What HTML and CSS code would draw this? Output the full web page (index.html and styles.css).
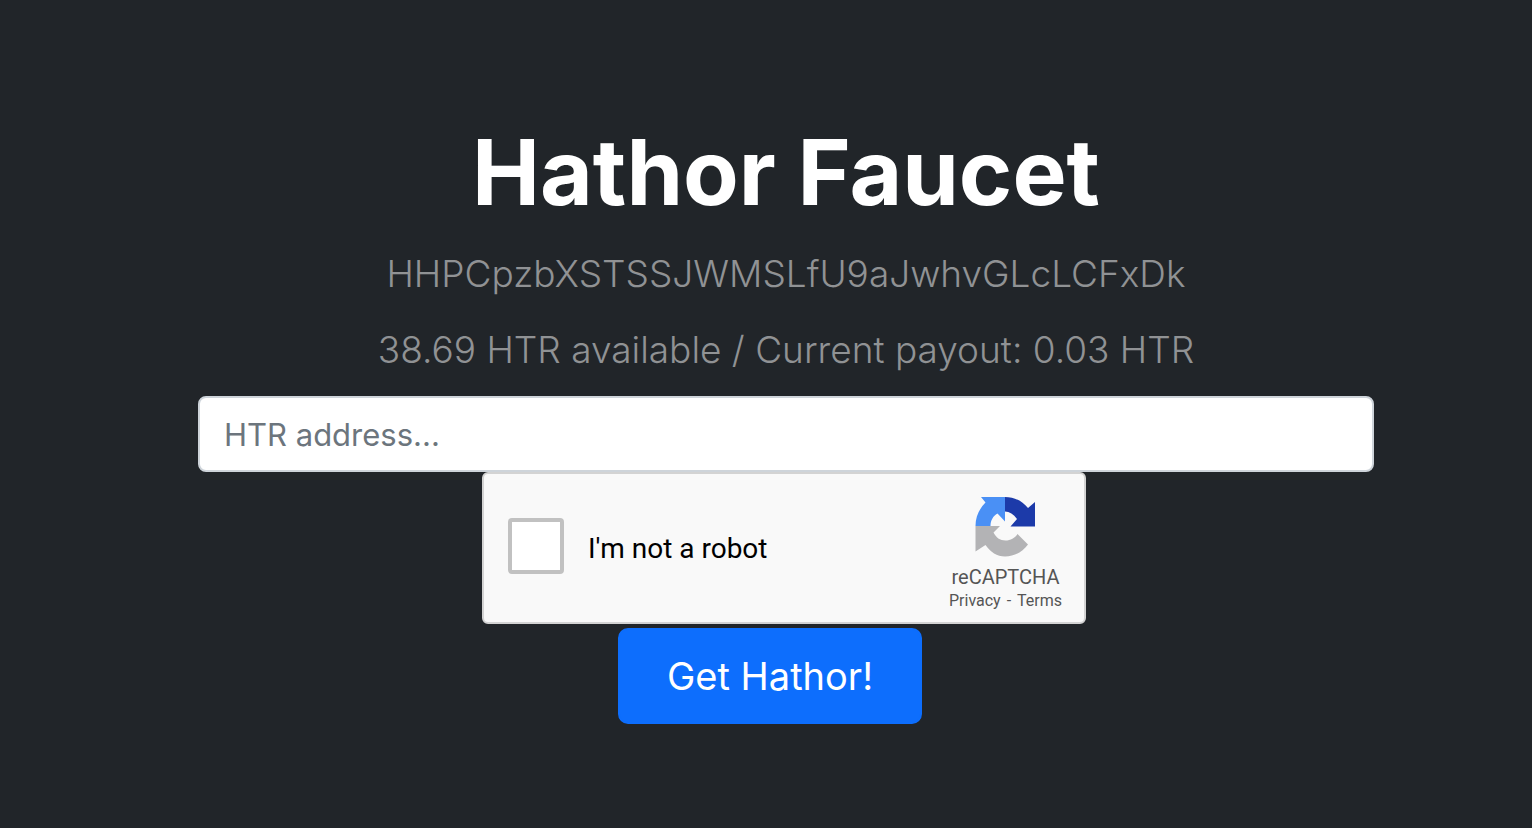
FILE: index.html
```html
<!DOCTYPE html>
<html lang="en">
<head>
    <meta charset="UTF-8" />
    <meta name="viewport" content="width=device-width, initial-scale=1" />
    <title>Hathor Faucet</title>
    <link rel="stylesheet" href="styles.css">
</head>
<body>
    <main class="faucet">
        <h1>Hathor Faucet</h1>
        <p class="address">HHPCpzbXSTSSJWMSLfU9aJwhvGLcLCFxDk</p>
        <p class="balance">38.69 HTR available / Current payout: 0.03 HTR</p>

        <form class="faucet-form">
            <input class="address-input" type="text" name="address" placeholder="HTR address..." aria-label="HTR address" />

            <div class="captcha">
                <input class="captcha-check" type="checkbox" id="robot" />
                <label class="captcha-label" for="robot">I'm not a robot</label>
                <div class="captcha-brand">
                    <svg class="captcha-logo" viewBox="0 0 60 61" aria-hidden="true">
                        <path fill="#4a90f5" d="M6 1H30V25.5L22.5 17.5C18 20 15.5 24.5 15.5 30H0.5C0.5 20.5 4.500 12.500 10.500 6.500Z" />
                        <path fill="#1c3aa9" d="M30 1C39.500 1 47.500 5 53 12L60 6V30.500H35.500L42 23C38.500 18 34.500 15.500 30 15.500Z" />
                        <path fill="#b3b3b5" d="M0.5 30H25L18.500 36.500C21 41.500 25 44.500 30.500 44.500C35.500 44.500 40 42 42.500 38L53 48.500C47.500 56 39.500 60.500 30 60.500C22 60.500 15.500 56 10.500 49L0.5 55.5Z" />
                    </svg>
                    <span class="captcha-name">reCAPTCHA</span>
                    <span class="captcha-links"><a href="#privacy">Privacy</a> - <a href="#terms">Terms</a></span>
                </div>
            </div>

            <button class="submit" type="submit">Get Hathor!</button>
        </form>
    </main>
</body>
</html>
```
FILE: styles.css
```css
* {
    box-sizing: border-box;
}

body {
    margin: 0;
    padding: 112px 0 104px 40px;
    background: #212529;
    font-family: Inter, "Liberation Sans", sans-serif;
}

.faucet {
    max-width: 1176px;
    margin: 0 auto;
    text-align: center;
}

h1 {
    margin: 0 0 12px;
    color: #fff;
    font-size: 91px;
    font-weight: 700;
    line-height: 120px;
}

.address,
.balance {
    margin: 0 0 16px;
    color: #909294;
    font-size: 37px;
    font-weight: 300;
    line-height: 60px;
}

.faucet-form {
    display: flex;
    flex-direction: column;
    align-items: center;
}

.address-input {
    width: 100%;
    height: 76px;
    padding: 0 24px;
    border: 2px solid #ced4da;
    border-radius: 8px;
    background: #fff;
    color: #212529;
    font-family: inherit;
    font-size: 31px;
}

.address-input::placeholder {
    color: #6c757d;
    opacity: 1;
}

.captcha {
    display: flex;
    align-items: center;
    width: 604px;
    max-width: 100%;
    height: 152px;
    margin: 0 4px 4px 0;
    padding: 0 20px 0 24px;
    border: 2px solid #d3d3d3;
    border-radius: 6px;
    background: #f9f9f9;
    font-family: Roboto, sans-serif;
}

.captcha-check {
    appearance: none;
    width: 56px;
    height: 56px;
    margin: 0 24px 4px 0;
    border: 4px solid #c1c1c1;
    border-radius: 4px;
    background: #fff;
}

.captcha-check:checked {
    background: #4a90f5;
}

.captcha-label {
    color: #000;
    font-size: 28px;
}

.captcha-brand {
    display: flex;
    flex-direction: column;
    align-items: center;
    margin-left: auto;
    padding-top: 12px;
    color: #555;
}

.captcha-logo {
    width: 60px;
    height: 61px;
    margin-bottom: 8px;
}

.captcha-name {
    font-size: 20px;
    line-height: 24px;
}

.captcha-links {
    font-size: 16px;
    line-height: 24px;
}

.captcha-links a {
    margin: 0 2px;
    color: inherit;
    text-decoration: none;
}

.submit {
    margin-right: 32px;
    padding: 16px 47px;
    border: 2px solid #0d6efd;
    border-radius: 10px;
    background: #0d6efd;
    color: #fff;
    font-family: inherit;
    font-size: 38px;
    line-height: 60px;
}
```
